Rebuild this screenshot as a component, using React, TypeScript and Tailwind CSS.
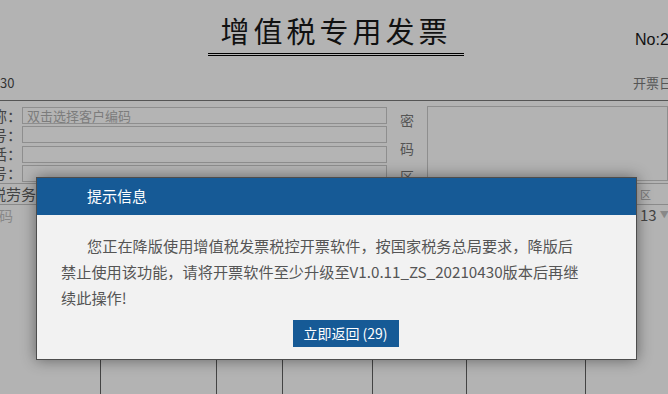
import React from "react";

const cjk = { fontFamily: '"Microsoft YaHei", "Noto Sans CJK SC", sans-serif' };

function Field({ label, value }: { label: string; value?: string }) {
  return (
    <div className="flex items-center h-[20px]">
      <div className="w-[22px] overflow-hidden flex justify-end">
        <span className="shrink-0 whitespace-nowrap text-[15px] leading-[18px] text-[#444]">{label}</span>
      </div>
      <div className="w-[365px] h-[17px] border border-[#8e8e8e] bg-[#b4b4b4] text-[13px] leading-[15px] pl-[4px] text-[#7c7c7c]">
        {value}
      </div>
    </div>
  );
}

export default function App() {
  return (
    <div className="relative w-[668px] h-[394px] overflow-hidden bg-[#b3b3b3]" style={cjk}>
      {/* invoice header */}
      <div className="h-[101px] border-b border-[#555]">
        <div className="flex pt-[12px]">
          <div className="w-[208px] shrink-0" />
          <div className="w-[256px] shrink-0 h-[44px] border-b-[3px] border-double border-black flex justify-center">
            <span className="text-[29px] leading-[36px] tracking-[4px] text-[#111]">增值税专用发票</span>
          </div>
          <div className="w-[171px] shrink-0" />
          <div className="pt-[16px] text-[16px] text-[#111] whitespace-nowrap" style={{ fontFamily: '"Liberation Sans", sans-serif' }}>
            No:2
          </div>
        </div>
        <div className="flex justify-between mt-[17px] text-[13px] text-[#333]">
          <span>30</span>
          <span className="w-[35px] whitespace-nowrap overflow-hidden text-[#555]">开票日期</span>
        </div>
      </div>

      {/* buyer block */}
      <div className="flex pt-[5px] h-[82px]">
        <div className="flex flex-col">
          <Field label="名称：" value="双击选择客户编码" />
          <Field label="识别号：" />
          <Field label="地址电话：" />
          <Field label="账号：" />
        </div>
        <div className="w-[40px] flex flex-col items-center text-[14px] text-[#555]">
          <span className="h-[28px] leading-[28px]">密</span>
          <span className="h-[28px] leading-[28px]">码</span>
          <span className="h-[28px] leading-[28px]">区</span>
        </div>
        <div className="flex-1 h-[75px] border border-[#8e8e8e]" />
      </div>

      <div className="h-[22px] border-t border-b border-[#8a8a8a] flex items-center justify-between text-[15px] text-[#444]">
        <div className="w-[36px] overflow-hidden flex justify-end">
          <span className="shrink-0 whitespace-nowrap">货物或应税劳务</span>
        </div>
        <span className="w-[28px] text-[11px] text-[#777]">区</span>
      </div>
      <div className="h-[20px] flex items-center justify-between text-[14px] text-[#888]">
        <div className="w-[13px] overflow-hidden flex justify-end">
          <span className="shrink-0 whitespace-nowrap">编码</span>
        </div>
        <span className="w-[28px] flex items-center gap-[3px] text-[15px] text-[#444]">
          13<span className="text-[9px] text-[#888]">▼</span>
        </span>
      </div>

      {/* table grid below */}
      <div className="h-[135px]" />
      <div className="flex h-[34px]">
        <div className="w-[101px] border-r border-[#444]" />
        <div className="w-[116px] border-r border-[#444]" />
        <div className="w-[66px] border-r border-[#444]" />
        <div className="w-[90px] border-r border-[#444]" />
        <div className="w-[94px] border-r border-[#444]" />
        <div className="w-[119px] border-r border-[#444]" />
      </div>

      {/* modal */}
      <div className="absolute left-[36px] top-[177px] w-[601px] h-[183px] border border-[#4d4d4d] bg-[#f2f2f2] shadow-[0_0_14px_rgba(0,0,0,0.45)] flex flex-col">
        <div className="h-[37px] bg-[#165a96] flex items-center pl-[50px] text-[15px] text-white">提示信息</div>
        <div className="pl-[24px] pt-[17px] text-[15.2px] leading-[26px] text-[#555] whitespace-nowrap">
          <div className="pl-[26px]">您正在降版使用增值税发票税控开票软件，按国家税务总局要求，降版后</div>
          <div>禁止使用该功能，请将开票软件至少升级至V1.0.11_ZS_20210430版本后再继</div>
          <div>续此操作!</div>
        </div>
        <div className="flex justify-center pl-[18px] mt-[10px]">
          <div className="w-[106px] h-[27px] bg-[#165a96] text-white text-[14px] flex items-center justify-center">
            立即返回 (29)
          </div>
        </div>
      </div>
    </div>
  );
}
